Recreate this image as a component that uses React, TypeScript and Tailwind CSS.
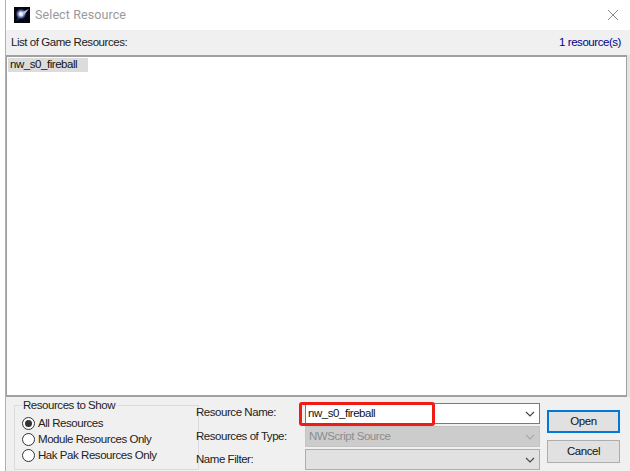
const titleFont = { fontFamily: 'Roboto, sans-serif' }

function Radio({ label, checked }: { label: string; checked?: boolean }) {
  return (
    <div className="flex h-[16px] items-center">
      <span className="flex h-[13px] w-[13px] shrink-0 items-center justify-center rounded-full border border-[#333] bg-white">
        {checked && <span className="h-[7px] w-[7px] rounded-full bg-[#333]" />}
      </span>
      <span className="ml-[3px] leading-none text-[#222]">{label}</span>
    </div>
  )
}

function Chevron({ color }: { color: string }) {
  return (
    <svg width="10" height="6" viewBox="0 0 10 6" className="mr-[1px] shrink-0">
      <path d="M1 1 L5 5 L9 1" fill="none" stroke={color} strokeWidth="1.1" />
    </svg>
  )
}

function Combo({ value, className, chevron, textClass }: { value: string; className: string; chevron: string; textClass?: string }) {
  return (
    <div className={`flex h-[21px] w-[235px] items-center justify-between border pl-[3px] pr-[3px] ${className}`}>
      <span className={textClass}>{value}</span>
      <Chevron color={chevron} />
    </div>
  )
}

export default function App() {
  return (
    <div
      className="flex h-[471px] w-[630px] flex-col overflow-hidden bg-white pl-[5px] text-[11.5px] tracking-[-0.45px]"
      style={{ fontFamily: 'Liberation Sans, sans-serif' }}
    >
      <div className="flex h-full w-[625px] flex-col border-l border-[#b0b0b0]">
        <div className="flex h-[30px] shrink-0 items-center justify-between pl-[8px] pr-[11px]">
          <div className="flex items-center">
            <svg width="16" height="16" viewBox="0 0 16 16">
              <defs>
                <radialGradient id="fb" cx="0.5" cy="0.5" r="0.5">
                  <stop offset="0" stopColor="#ffffff" />
                  <stop offset="0.3" stopColor="#dfe6fb" />
                  <stop offset="0.65" stopColor="#5f74c0" stopOpacity="0.7" />
                  <stop offset="1" stopColor="#10102a" stopOpacity="0" />
                </radialGradient>
              </defs>
              <rect width="16" height="16" fill="#05050f" />
              <path d="M6 7 L2 14 L9 9 Z" fill="#2c3566" />
              <circle cx="7" cy="7" r="6" fill="url(#fb)" />
              <path d="M8 5 L15 2 L10 8 Z" fill="#aeb9e6" />
            </svg>
            <span className="ml-[5px] text-[12.5px] tracking-[0.1px] text-[#9a9a9a]" style={titleFont}>
              Select Resource
            </span>
          </div>
          <svg width="12" height="12" viewBox="0 0 12 12">
            <path d="M1 1 L11 11 M11 1 L1 11" stroke="#8c8c8c" strokeWidth="1" fill="none" />
          </svg>
        </div>

        <div className="flex h-[25px] shrink-0 items-center justify-between bg-[#f0f0f0] pl-[5px] pr-[9px] leading-none">
          <span className="text-[#222]">List of Game Resources:</span>
          <span className="text-[#00008b]">1 resource(s)</span>
        </div>

        <div className="flex h-[342px] shrink-0 bg-[#f0f0f0]">
          <div className="min-w-0 flex-1 border-y-2 border-x border-[#a0a0a0] bg-white pl-[1px] pt-[1px]">
            <div className="flex h-[14px] w-[80px] items-center bg-[#dcdcdc] pl-[2px] leading-none text-[#111]">nw_s0_fireball</div>
          </div>
          <div className="w-[3px] shrink-0 bg-[#e4e4e4]" />
        </div>

        <div className="flex min-h-0 flex-1 bg-[#f0f0f0] text-[#222]">
          <fieldset className="ml-[8px] mt-[3px] h-[70px] w-[185px] shrink-0 border border-[#dcdcdc] pl-[7px]">
            <legend className="px-[1px] leading-none">Resources to Show</legend>
            <div className="mt-[4px] flex flex-col">
              <Radio label="All Resources" checked />
              <Radio label="Module Resources Only" />
              <Radio label="Hak Pak Resources Only" />
            </div>
          </fieldset>

          <div className="-ml-[3px] flex w-[109px] shrink-0 flex-col pt-[10px] leading-none">
            <span className="h-[24px]">Resource Name:</span>
            <span className="h-[23px]">Resources of Type:</span>
            <span>Name Filter:</span>
          </div>

          <div className="flex flex-col gap-[2px] pt-[6px]">
            <div className="relative">
              <Combo value="nw_s0_fireball" className="border-[#7a7a7a] bg-white" chevron="#444" textClass="-ml-[1px] text-[#111]" />
              <div className="absolute -left-[6px] -top-[1px] h-[24px] w-[136px] rounded-[3px] border-[3px] border-[#ee1c14]" />
            </div>
            <Combo value="NWScript Source" className="border-[#c4c4c4] bg-[#cccccc]" chevron="#a8a8a8" textClass="text-[#8c8c8c]" />
            <Combo value="" className="border-[#adadad] bg-[#e1e1e1]" chevron="#444" />
          </div>

          <div className="ml-[7px] flex flex-col gap-[7px] pt-[13px]">
            <div className="flex h-[23px] w-[73px] items-center justify-center border-2 border-[#0078d7] bg-[#e1e1e1] text-[#111]">Open</div>
            <div className="flex h-[23px] w-[73px] items-center justify-center border border-[#adadad] bg-[#e1e1e1] text-[#111]">Cancel</div>
          </div>
        </div>
      </div>
    </div>
  )
}
